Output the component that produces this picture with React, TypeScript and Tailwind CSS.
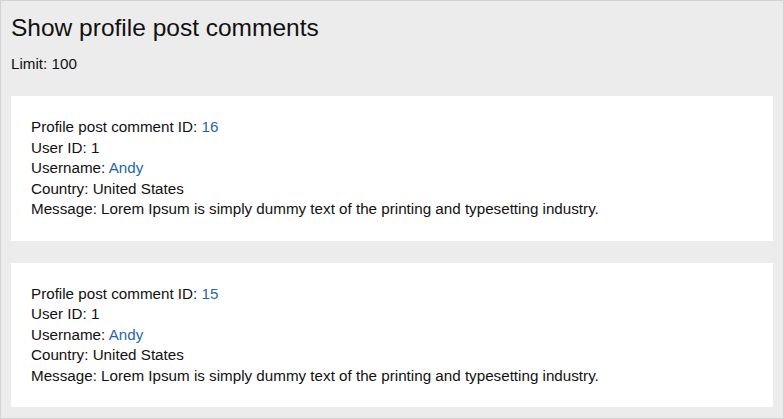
type Comment = {
  id: number
  userId: number
  username: string
  country: string
  message: string
}

const comments: Comment[] = [
  {
    id: 16,
    userId: 1,
    username: 'Andy',
    country: 'United States',
    message:
      'Lorem Ipsum is simply dummy text of the printing and typesetting industry.',
  },
  {
    id: 15,
    userId: 1,
    username: 'Andy',
    country: 'United States',
    message:
      'Lorem Ipsum is simply dummy text of the printing and typesetting industry.',
  },
]

function CommentCard({ comment }: { comment: Comment }) {
  return (
    <div className="bg-white px-5 pt-[21px] pb-[21px] text-[15.2px] leading-[20.5px]">
      <div>
        Profile post comment ID:{' '}
        <a className="text-[#1f67a9]" href="#">
          {comment.id}
        </a>
      </div>
      <div>User ID: {comment.userId}</div>
      <div>
        Username:{' '}
        <a className="text-[#1f67a9]" href="#">
          {comment.username}
        </a>
      </div>
      <div>Country: {comment.country}</div>
      <div>Message: {comment.message}</div>
    </div>
  )
}

export default function App() {
  return (
    <div
      className="w-[784px] h-[419px] border border-[#d2d2d2] bg-[#ececec] px-[10px] text-[#111]"
      style={{ fontFamily: '"Liberation Sans", Arial, sans-serif' }}
    >
      <h1 className="pt-[12px] text-[24.5px] leading-[30px]">
        Show profile post comments
      </h1>
      <div className="mt-[11px] text-[15.2px] leading-[20px]">Limit: 100</div>
      <div className="mt-[22px] flex flex-col gap-[22px]">
        {comments.map((c) => (
          <CommentCard key={c.id} comment={c} />
        ))}
      </div>
    </div>
  )
}
